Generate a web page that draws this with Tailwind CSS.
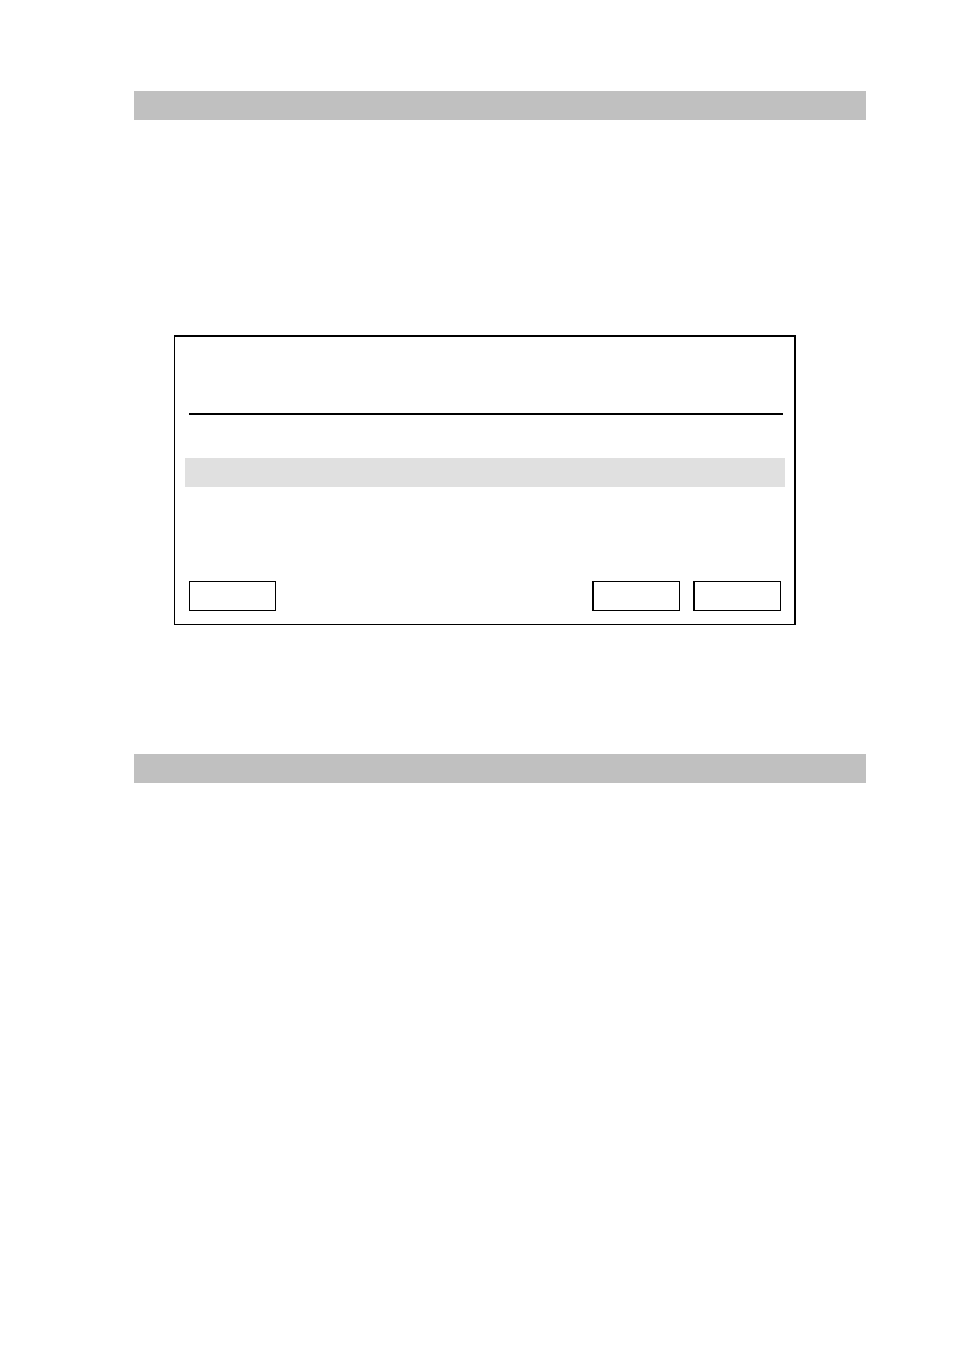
<!DOCTYPE html>
<html lang="en">
<head>
    <meta charset="UTF-8">
    <meta name="viewport" content="width=device-width, initial-scale=1.0">
    <title>Dialog</title>
    <script src="https://cdn.jsdelivr.net/npm/@tailwindcss/browser@4"></script>
</head>
<body class="bg-white font-['Liberation_Sans',sans-serif]">
    <main class="pt-[91px] pb-10 pl-[134px] pr-[88px]">
        <!-- Section bar -->
        <div class="h-[29px] bg-[#c0c0c0]"></div>

        <!-- Dialog frame -->
        <section class="mt-[215px] ml-10 mr-[70px] border-t-2 border-r-2 border-b border-l border-black pt-[76px] pb-[13px]">
            <hr class="ml-[14px] mr-[11px] border-t-2 border-black">
            <div class="mt-[43px] ml-[10px] mr-[9px] h-[29px] bg-[#e0e0e0]"></div>

            <div class="mt-[94px] ml-[14px] mr-[13px] flex gap-[13px]">
                <button type="button" aria-label="Left" class="mr-auto h-[30px] w-[87px] border border-black"></button>
                <button type="button" aria-label="Middle" class="h-[30px] w-[88px] border border-l-2 border-black"></button>
                <button type="button" aria-label="Right" class="h-[30px] w-[88px] border border-l-2 border-black"></button>
            </div>
        </section>

        <!-- Section bar -->
        <div class="mt-[129px] h-[29px] bg-[#c0c0c0]"></div>
    </main>
</body>
</html>
